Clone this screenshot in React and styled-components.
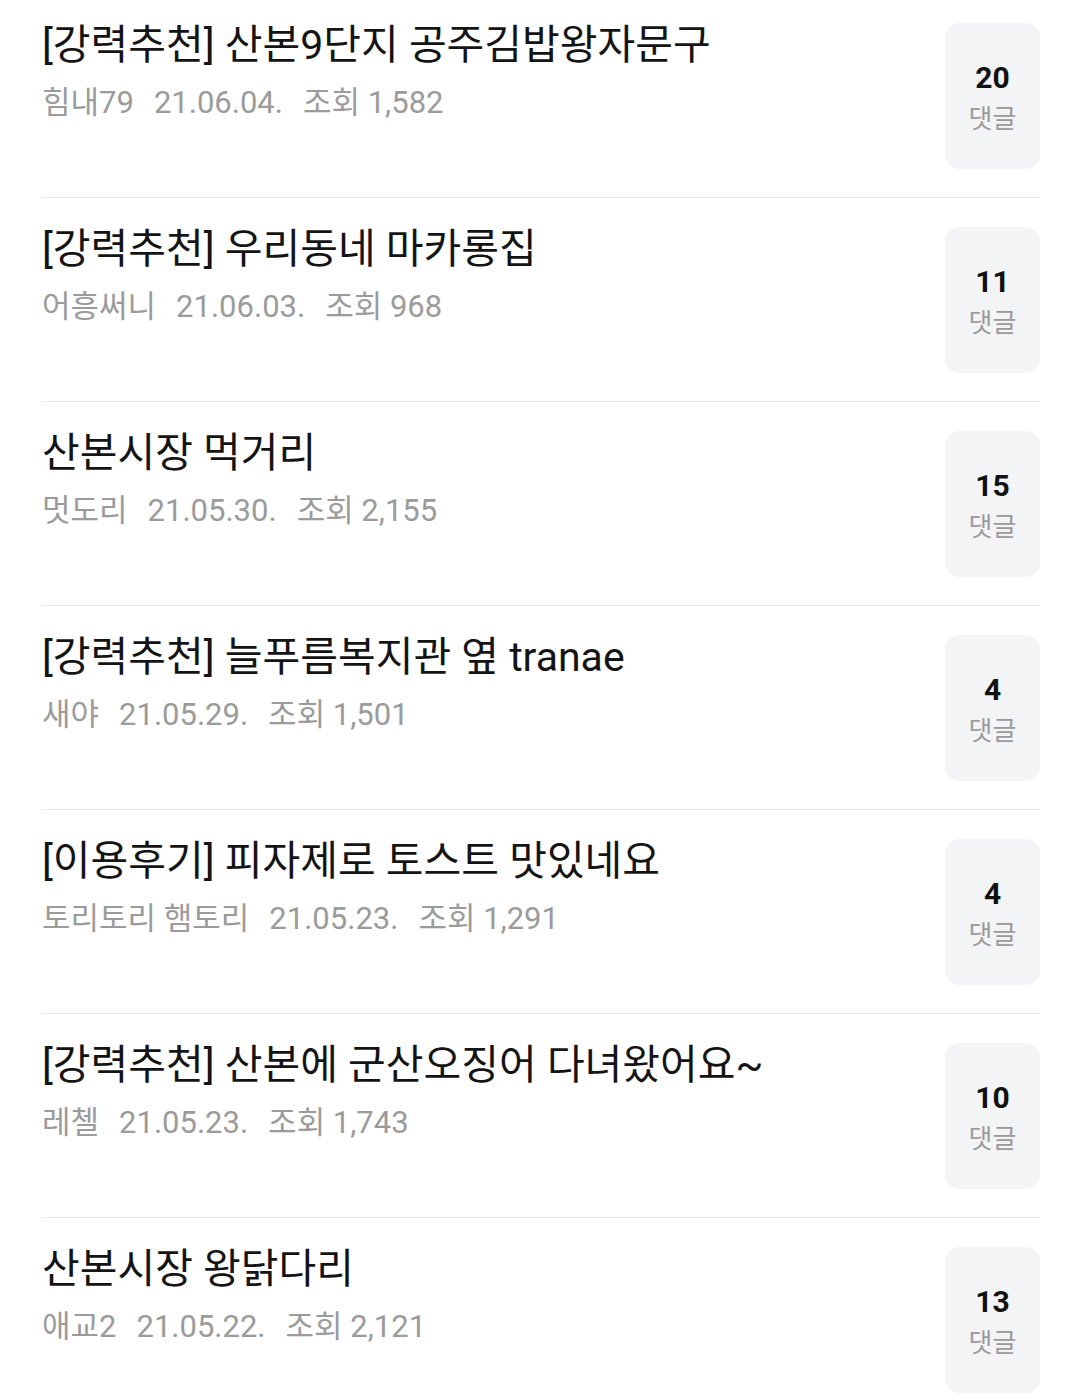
import styled, { createGlobalStyle } from "styled-components";

const GlobalStyle = createGlobalStyle`
  html, body {
    margin: 0;
    padding: 0;
    background: #ffffff;
  }
  body {
    font-family: Roboto, "Noto Sans CJK KR", sans-serif;
    overflow: hidden;
  }
`;

const posts = [
  { title: "[강력추천] 산본9단지 공주김밥왕자문구", author: "힘내79", date: "21.06.04.", views: "1,582", comments: 20 },
  { title: "[강력추천] 우리동네 마카롱집", author: "어흥써니", date: "21.06.03.", views: "968", comments: 11 },
  { title: "산본시장 먹거리", author: "멋도리", date: "21.05.30.", views: "2,155", comments: 15 },
  { title: "[강력추천] 늘푸름복지관 옆 tranae", author: "새야", date: "21.05.29.", views: "1,501", comments: 4 },
  { title: "[이용후기] 피자제로 토스트 맛있네요", author: "토리토리 햄토리", date: "21.05.23.", views: "1,291", comments: 4 },
  { title: "[강력추천] 산본에 군산오징어 다녀왔어요~", author: "레첼", date: "21.05.23.", views: "1,743", comments: 10 },
  { title: "산본시장 왕닭다리", author: "애교2", date: "21.05.22.", views: "2,121", comments: 13 },
];

const List = styled.ul`
  list-style: none;
  margin: -6px 40px 0 42px;
  padding: 0;
`;

const Row = styled.li`
  display: flex;
  align-items: flex-start;
  justify-content: space-between;
  height: 203px;
  border-bottom: 1px solid #e9e9eb;
`;

const Info = styled.div`
  display: flex;
  flex-direction: column;
  padding-top: 24px;
  gap: 11px;
`;

const Title = styled.div`
  font-size: 41px;
  line-height: 54px;
  color: #141414;
  white-space: nowrap;
`;

const Meta = styled.div`
  display: flex;
  gap: 20px;
  font-size: 31px;
  line-height: 40px;
  color: #9b9b9b;
  white-space: nowrap;
`;

const CommentBox = styled.div`
  margin-top: 29px;
  padding-top: 4px;
  box-sizing: border-box;
  width: 95px;
  height: 146px;
  border-radius: 14px;
  background: #f3f4f6;
  display: flex;
  flex-direction: column;
  align-items: center;
  justify-content: center;
  gap: 6px;
`;

const Count = styled.span`
  font-size: 30px;
  line-height: 36px;
  font-weight: 700;
  color: #111111;
`;

const Label = styled.span`
  font-size: 26px;
  line-height: 34px;
  color: #9b9b9b;
`;

export default function App() {
  return (
    <>
      <GlobalStyle />
      <List>
        {posts.map((p, i) => (
          <Row key={i}>
            <Info>
              <Title>{p.title}</Title>
              <Meta>
                <span>{p.author}</span>
                <span>{p.date}</span>
                <span>조회 {p.views}</span>
              </Meta>
            </Info>
            <CommentBox>
              <Count>{p.comments}</Count>
              <Label>댓글</Label>
            </CommentBox>
          </Row>
        ))}
      </List>
    </>
  );
}
